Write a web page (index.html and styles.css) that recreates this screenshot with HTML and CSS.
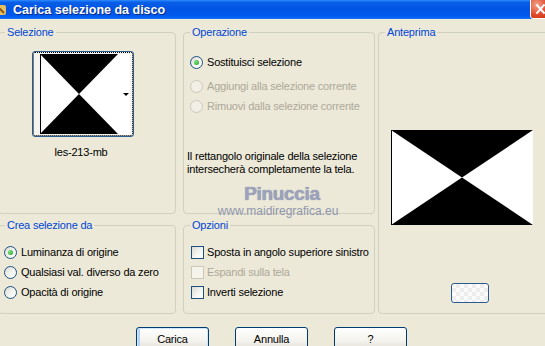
FILE: index.html
```html
<!DOCTYPE html>
<html lang="it">
<head>
    <meta charset="UTF-8">
    <title>Carica selezione da disco</title>
    <link rel="stylesheet" href="styles.css">
</head>
<body>
    <!-- barra del titolo -->
    <div class="titlebar">
        <span class="app-icon">
            <svg width="10" height="14" viewBox="0 0 10 14">
                <rect x="-4" y="2" width="10" height="10" rx="2" fill="#E8C060"/>
                <path d="M-2 4 L4 10" stroke="#8B5A1E" stroke-width="2"/>
            </svg>
        </span>
        <span class="title">Carica selezione da disco</span>
        <span class="close">
            <svg width="21" height="21" viewBox="0 0 21 21">
                <path d="M6 5 L15 15 M15 5 L6 15" stroke="#fff" stroke-width="2.2"/>
            </svg>
        </span>
    </div>

    <div class="main">
        <div class="col col-left">
            <!-- selezione -->
            <div class="group group-tall">
                <div class="group-title">Selezione</div>
                <div class="thumb-wrap">
                    <div class="thumb">
                        <svg class="thumb-img" width="78" height="80" viewBox="0 0 78 80" preserveAspectRatio="none">
                            <rect width="78" height="80" fill="#fff"/>
                            <polygon points="0,0 78,0 39,40" fill="#000"/>
                            <polygon points="0,80 78,80 39,40" fill="#000"/>
                            <rect width="1" height="80" fill="#000"/>
                        </svg>
                        <span class="thumb-strip"><span class="arrow"></span></span>
                    </div>
                    <div class="thumb-name">les-213-mb</div>
                </div>
            </div>

            <!-- crea selezione da -->
            <div class="group group-short">
                <div class="group-title">Crea selezione da</div>
                <div class="options crea">
                    <div class="opt"><span class="radio checked"></span>Luminanza di origine</div>
                    <div class="opt"><span class="radio"></span>Qualsiasi val. diverso da zero</div>
                    <div class="opt"><span class="radio"></span>Opacità di origine</div>
                </div>
            </div>
        </div>

        <div class="col col-mid">
            <!-- operazione -->
            <div class="group group-tall">
                <div class="group-title">Operazione</div>
                <div class="opt op-first"><span class="radio checked"></span>Sostituisci selezione</div>
                <div class="opt op-second disabled"><span class="radio"></span>Aggiungi alla selezione corrente</div>
                <div class="opt op-third disabled"><span class="radio"></span>Rimuovi dalla selezione corrente</div>
                <div class="info">Il rettangolo originale della selezione<br>intersecherà completamente la tela.</div>
            </div>

            <!-- opzioni -->
            <div class="group group-short">
                <div class="group-title">Opzioni</div>
                <div class="options opzioni">
                    <div class="opt"><span class="check"></span>Sposta in angolo superiore sinistro</div>
                    <div class="opt disabled"><span class="check"></span>Espandi sulla tela</div>
                    <div class="opt"><span class="check"></span>Inverti selezione</div>
                </div>
            </div>
        </div>

        <!-- anteprima -->
        <div class="group group-preview">
            <div class="group-title">Anteprima</div>
            <svg class="preview-img" width="142" height="95" viewBox="0 0 142 95" preserveAspectRatio="none">
                <rect width="142" height="95" fill="#fff"/>
                <polygon points="0,0 142,0 71,47.5" fill="#000"/>
                <polygon points="0,95 142,95 71,47.5" fill="#000"/>
                <rect width="1" height="95" fill="#000"/>
            </svg>
            <div class="mini-btn"></div>
        </div>
    </div>

    <div class="buttons">
        <button class="btn btn-default">Carica</button>
        <button class="btn">Annulla</button>
        <button class="btn">?</button>
    </div>

    <div class="watermark">
        <div class="wm-name">Pinuccia</div>
        <div class="wm-url">www.maidiregrafica.eu</div>
    </div>
</body>
</html>
```

FILE: styles.css
```css
* {
    box-sizing: border-box;
}
body {
    margin: 0;
    width: 545px;
    height: 346px;
    overflow: hidden;
    position: relative;
    background-color: #ECE9D8;
    font-family: "Liberation Sans", Arial, sans-serif;
    font-size: 11px;
    letter-spacing: -0.2px;
    color: #000;
}

/* barra del titolo */
.titlebar {
    height: 19px;
    display: flex;
    align-items: center;
    background: linear-gradient(to bottom, #2E8BFF 0%, #0A5FE8 12%, #0054E3 45%, #0058EC 80%, #0062F6 92%, #2B7CF0 100%);
}
.app-icon {
    width: 10px;
    height: 14px;
    display: flex;
}
.title {
    margin-left: 3px;
    color: #fff;
    font-weight: bold;
    font-size: 12.5px;
    letter-spacing: 0;
    text-shadow: 1px 1px 0 #0A2A8C;
}
.close {
    margin-left: auto;
    margin-right: -6px;
    margin-top: -2px;
    width: 21px;
    height: 21px;
    border: 1px solid #fff;
    border-radius: 3px;
    background: radial-gradient(circle at 30% 30%, #F2A48A, #E0472A 55%, #C23514);
    display: flex;
}

/* area principale */
.main {
    display: flex;
    margin-top: 13px;
    margin-left: -2px;
    align-items: flex-start;
}
.col {
    display: flex;
    flex-direction: column;
    gap: 11px;
    flex: none;
}
.col-left {
    width: 178px;
}
.col-mid {
    width: 192px;
    margin-left: 7px;
}
.group {
    border: 1px solid #D0D0BF;
    border-radius: 4px;
}
.group-tall {
    height: 182px;
}
.group-short {
    height: 89px;
}
.group-preview {
    flex: none;
    width: 180px;
    height: 282px;
    margin-left: 3px;
}
.group-title {
    width: max-content;
    margin: -7px 0 0 6px;
    padding: 0 2px;
    line-height: 13px;
    background-color: #ECE9D8;
    color: #0046D5;
}

/* miniatura selezione */
.thumb-wrap {
    width: 102px;
    margin: 12px 0 0 33px;
}
.thumb {
    height: 86px;
    border: 1px solid #2C5B8E;
    border-radius: 3px;
    background-color: #F4F3EE;
    outline: 1px dotted #000;
    outline-offset: -2px;
    display: flex;
    padding: 2px 2px 1px 7px;
}
.thumb-img {
    display: block;
}
.thumb-strip {
    width: 12px;
    background-color: #fff;
    display: flex;
    align-items: center;
    justify-content: flex-end;
    padding-right: 1px;
}
.arrow {
    width: 0;
    height: 0;
    border-left: 3px solid transparent;
    border-right: 3px solid transparent;
    border-top: 3px solid #000;
}
.thumb-name {
    margin-top: 9px;
    margin-left: -4px;
    text-align: center;
    line-height: 13px;
}

/* opzioni e radio */
.opt {
    display: flex;
    align-items: center;
    gap: 4px;
    height: 13px;
    line-height: 13px;
    white-space: nowrap;
}
.opt.disabled {
    color: #ACA899;
}
.options {
    display: flex;
    flex-direction: column;
    gap: 7px;
    margin-top: 14px;
}
.crea {
    margin-left: 5px;
}
.opzioni {
    margin-left: 7px;
}
.opzioni .opt {
    gap: 3px;
}
.op-first,
.op-second,
.op-third {
    margin-left: 6px;
}
.op-first {
    margin-top: 17px;
}
.op-second {
    margin-top: 11px;
}
.op-third {
    margin-top: 7px;
}
.info {
    margin: 37px 0 0 3px;
    line-height: 13px;
}

.radio {
    width: 13px;
    height: 13px;
    flex: none;
    border-radius: 50%;
    border: 1px solid #1C5180;
    background: linear-gradient(135deg, #DCDBD5, #F6F6F3 60%, #fff);
    display: flex;
    align-items: center;
    justify-content: center;
}
.radio.checked::after {
    content: "";
    width: 5px;
    height: 5px;
    border-radius: 50%;
    background: radial-gradient(circle at 35% 35%, #7BE37B, #21A121);
}
.disabled .radio {
    border-color: #CAC8BB;
    background: #F2F0E6;
}
.check {
    width: 13px;
    height: 13px;
    flex: none;
    border: 1px solid #1C5180;
    background: linear-gradient(135deg, #DCDBD5, #F6F6F3 60%, #fff);
}
.disabled .check {
    border-color: #CAC8BB;
    background: #F5F4EA;
}

/* anteprima */
.preview-img {
    display: block;
    margin: 91px 0 0 12px;
}
.mini-btn {
    width: 38px;
    height: 20px;
    margin: 58px 0 0 72px;
    border: 1px solid #2C5B8E;
    border-radius: 3px;
    background:
        repeating-conic-gradient(#EDEDED 0 25%, #FBFBFB 0 50%) 0 0 / 8px 8px;
}

/* pulsanti */
.buttons {
    display: flex;
    gap: 26px;
    margin-top: 13px;
    padding-left: 136px;
}
.btn {
    flex: none;
    width: 73px;
    height: 23px;
    padding: 0;
    font-family: "Liberation Sans", Arial, sans-serif;
    font-size: 11px;
    letter-spacing: -0.2px;
    color: #000;
    border: 1px solid #003C74;
    border-radius: 3px;
    background: linear-gradient(to bottom, #FFFFFF, #F4F3EE 60%, #E3E0D6);
}
.btn-default {
    box-shadow: inset 0 0 0 1px #CEE7FF, inset 0 -2px 0 1px #A9C7F4, inset 2px 0 0 1px #B8D2F8;
}

/* filigrana */
.watermark {
    position: absolute;
    left: 216px;
    top: 183px;
    width: 124px;
    text-align: center;
    color: #9DA3BD;
}
.wm-name {
    font-weight: bold;
    font-size: 19px;
    line-height: 22px;
    letter-spacing: -0.3px;
    margin-left: 8px;
    text-shadow: 0 0 1px #6E7797;
}
.wm-url {
    font-size: 12px;
    line-height: 12px;
    letter-spacing: 0;
    color: #8F95AD;
}
```
